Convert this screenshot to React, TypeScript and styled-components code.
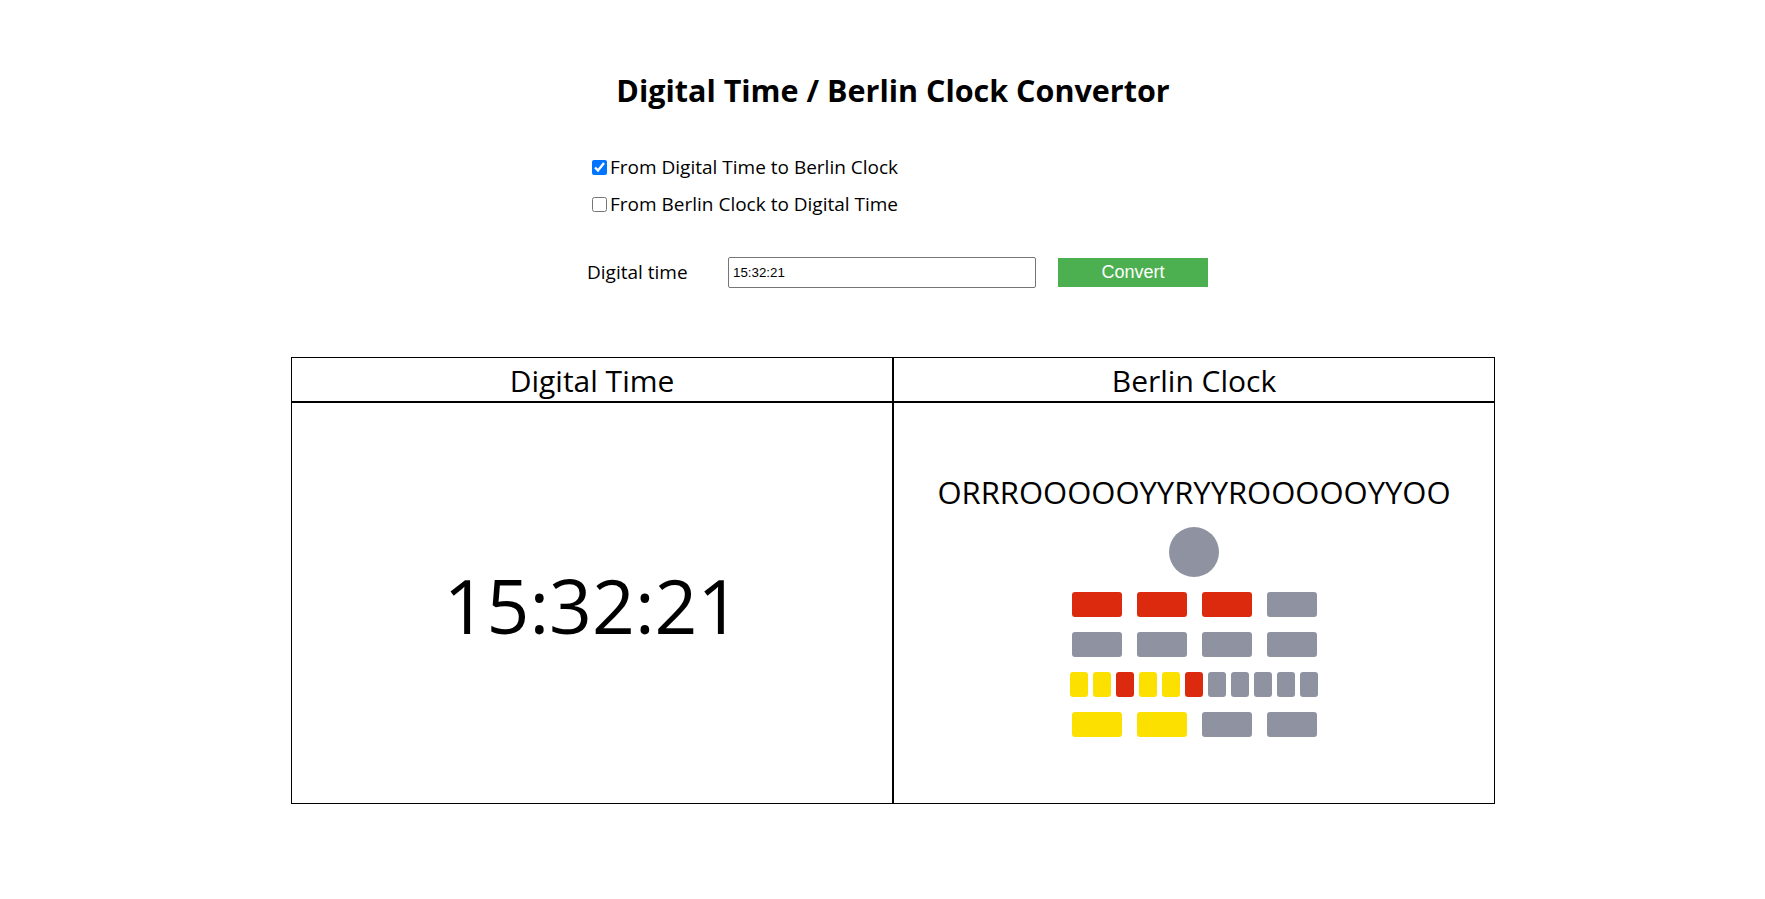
import React, { useState } from "react";
import styled, { createGlobalStyle } from "styled-components";

const Global = createGlobalStyle`
  html, body { margin: 0; padding: 0; background: #fff; }
  body { font-family: "Open Sans", "Noto Sans", sans-serif; color: #000; }
`;

const Page = styled.div`
  padding-left: 21px;
  padding-top: 70px;
`;

const Inner = styled.div`
  width: 1204px;
  margin: 0 auto;
`;

const Title = styled.h1`
  margin: 0;
  text-align: center;
  font-size: 30.5px;
  line-height: 40px;
  font-weight: 700;
`;

const Options = styled.div`
  margin: 45px 0 0 297px;
  display: flex;
  flex-direction: column;
  gap: 13px;
`;

const Option = styled.label`
  display: flex;
  align-items: center;
  height: 24px;
  font-size: 19px;
  line-height: 24px;
  cursor: pointer;
`;

const Check = styled.input`
  width: 15px;
  height: 15px;
  margin: 0 3px 0 4px;
`;

const InputRow = styled.div`
  margin: 41px 0 0 296px;
  display: flex;
  align-items: center;
  height: 31px;
`;

const FieldLabel = styled.span`
  width: 141px;
  font-size: 19px;
  line-height: 24px;
  margin-top: -2px;
`;

const TimeInput = styled.input`
  box-sizing: border-box;
  width: 308px;
  height: 31px;
  padding: 0 4px;
  border: 1px solid #767676;
  border-radius: 2px;
  font-family: "Liberation Sans", Arial, sans-serif;
  font-size: 13.333px;
  color: #000;
`;

const ConvertButton = styled.button`
  margin-left: 22px;
  width: 150px;
  height: 29px;
  border: none;
  background: #4caf50;
  color: #fff;
  font-family: "Liberation Sans", Arial, sans-serif;
  font-size: 18px;
  cursor: pointer;
`;

const Board = styled.div`
  margin-top: 69px;
  display: grid;
  grid-template-columns: 602px 602px;
  grid-template-rows: 45px 402px;
`;

const Cell = styled.div<{ $head?: boolean }>`
  box-sizing: border-box;
  border: 1px solid #000;
  display: flex;
  flex-direction: column;
  align-items: center;
  justify-content: center;
  font-size: ${(p) => (p.$head ? "30px" : "31px")};
  line-height: ${(p) => (p.$head ? "43px" : "40px")};
  padding-top: ${(p) => (p.$head ? "2px" : "3px")};
`;

const BigTime = styled.div`
  font-size: 75px;
  line-height: 90px;
`;

const Code = styled.div`
  font-size: 31px;
  line-height: 40px;
`;

const Second = styled.div<{ $on: boolean }>`
  margin-top: 15px;
  width: 50px;
  height: 50px;
  border-radius: 50%;
  background: ${(p) => (p.$on ? "#fce000" : "#8f93a1")};
`;

const LampRows = styled.div`
  margin-top: 15px;
  display: flex;
  flex-direction: column;
  gap: 15px;
  align-items: center;
`;

const LampRow = styled.div<{ $small?: boolean }>`
  display: flex;
  gap: ${(p) => (p.$small ? "5px" : "15px")};
`;

const colors: Record<string, string> = { R: "#dc2a0e", Y: "#fce000", O: "#8f93a1" };

const Lamp = styled.div<{ $c: string; $small?: boolean }>`
  width: ${(p) => (p.$small ? "18px" : "50px")};
  height: 25px;
  border-radius: 3px;
  background: ${(p) => colors[p.$c]};
`;

function toBerlin(t: string): string {
  const [h, m, s] = t.split(":").map((x) => parseInt(x, 10) || 0);
  const sec = s % 2 === 0 ? "Y" : "O";
  const fiveH = "RRRR".slice(0, Math.floor(h / 5)).padEnd(4, "O");
  const oneH = "RRRR".slice(0, h % 5).padEnd(4, "O");
  let fiveM = "";
  for (let i = 1; i <= 11; i++) fiveM += i <= Math.floor(m / 5) ? (i % 3 === 0 ? "R" : "Y") : "O";
  const oneM = "YYYY".slice(0, m % 5).padEnd(4, "O");
  return sec + fiveH + oneH + fiveM + oneM;
}

export default function App() {
  const [time, setTime] = useState("15:32:21");
  const [shown, setShown] = useState("15:32:21");
  const code = toBerlin(shown);
  const rows = [code.slice(1, 5), code.slice(5, 9), code.slice(9, 20), code.slice(20, 24)];
  return (
    <Page>
      <Global />
      <Inner>
        <Title>Digital Time / Berlin Clock Convertor</Title>
        <Options>
          <Option>
            <Check type="checkbox" defaultChecked />
            From Digital Time to Berlin Clock
          </Option>
          <Option>
            <Check type="checkbox" />
            From Berlin Clock to Digital Time
          </Option>
        </Options>
        <InputRow>
          <FieldLabel>Digital time</FieldLabel>
          <TimeInput value={time} onChange={(e) => setTime(e.target.value)} />
          <ConvertButton onClick={() => setShown(time)}>Convert</ConvertButton>
        </InputRow>
        <Board>
          <Cell $head>Digital Time</Cell>
          <Cell $head>Berlin Clock</Cell>
          <Cell>
            <BigTime>{shown}</BigTime>
          </Cell>
          <Cell>
            <Code>{code}</Code>
            <Second $on={code[0] === "Y"} />
            <LampRows>
              {rows.map((r, i) => (
                <LampRow key={i} $small={r.length > 4}>
                  {r.split("").map((c, j) => (
                    <Lamp key={j} $c={c} $small={r.length > 4} />
                  ))}
                </LampRow>
              ))}
            </LampRows>
          </Cell>
        </Board>
      </Inner>
    </Page>
  );
}
